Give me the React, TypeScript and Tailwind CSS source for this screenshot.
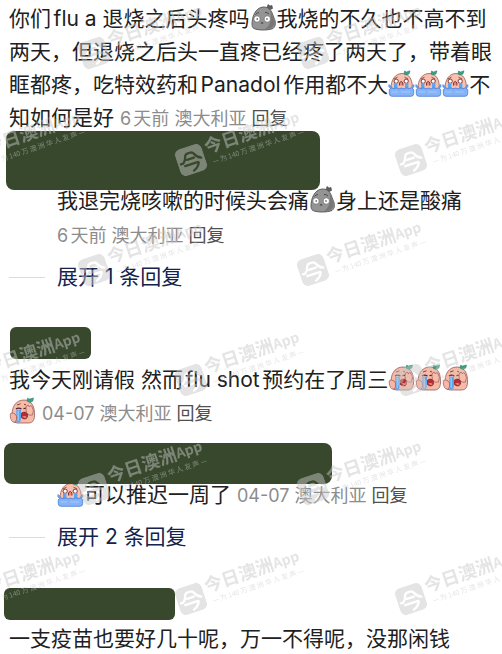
import React from 'react';

interface MetaProps {
  date: string;
  region: string;
}

interface EmojiProps {
  label: string;
}

function Meta({ date, region }: MetaProps) {
  return (
    <span className="text-lg leading-5 text-[#8c8c8c]">
      {date} {region}{' '}
      <button type="button" className="text-[#505050]">回复</button>
    </span>
  );
}

function StoneEmoji({ label }: EmojiProps) {
  return (
    <svg viewBox="0 0 27 28" role="img" aria-label={label} className="-mt-[5px] inline-block h-7 w-[27px] align-[-5px]">
      <path d="M17 5 L18 1.5 L20 3 L22 2.5 L22.5 5.5 L19 7 Z" fill="#5f5f5f" stroke="#404040" strokeWidth=".6" />
      <path
        d="M2 21 C2 14 5 5 13 4 C21 3.6 22 10 24 15 C26 19 26 23 23 25.5 C18 27.5 8 27.5 4 25.5 C2.3 24.5 2 23 2 21 Z"
        fill="#949494"
        stroke="#555"
        strokeWidth=".9"
      />
      <path d="M20 7 C22 12 24 16 24.5 19 C25 23 22 26 15 26.3 C21 22 22 14 20 7 Z" fill="#777" />
      <path d="M5.5 11.5 Q7 9.5 9 9.5 M15 9.5 Q17 9 19 11" fill="none" stroke="#444" strokeWidth=".9" />
      <circle cx="7" cy="16" r="3.2" fill="#fff" stroke="#555" strokeWidth=".6" />
      <circle cx="17.3" cy="16" r="3.2" fill="#fff" stroke="#555" strokeWidth=".6" />
      <circle cx="7.2" cy="16" r=".8" fill="#333" />
      <circle cx="17" cy="16" r=".8" fill="#333" />
      <path d="M10.5 20.5 L12 18.7 L13.7 20.5 Z" fill="#3d3d3d" />
    </svg>
  );
}

function PoolEmoji({ label }: EmojiProps) {
  return (
    <svg viewBox="0 0 27 27" role="img" aria-label={label} className="-mt-[5px] inline-block size-[27px] align-[-5px]">
      <path d="M3.2 19 C2.5 9 8 3.5 14 3.5 C21.5 3.5 25 10 24.3 20 Z" fill="#f8c0ae" stroke="#8a4a45" strokeWidth=".7" />
      <path d="M16 4 L16.5 1 L18.5 2 L22 .8 L21 4 L18 5 Z" fill="#35a486" stroke="#1e7560" strokeWidth=".5" />
      <path d="M5.8 9 L9.5 7.2 M16.5 7.2 L20.2 9" stroke="#7a2f30" strokeWidth=".8" />
      <circle cx="8.2" cy="11.2" r="2.1" fill="#fff" stroke="#71282a" strokeWidth=".9" />
      <circle cx="18.2" cy="11.2" r="2.1" fill="#fff" stroke="#71282a" strokeWidth=".9" />
      <path d="M11.5 15.5 L11.5 12.8 Q13.2 10 14.9 12.8 L14.9 15.5" fill="#e68a80" stroke="#71282a" strokeWidth=".9" />
      <path d="M6 13 H9.4 V20 H6 Z M17 13 H20.4 V20 H17 Z" fill="#5ba6f3" />
      <path d="M.8 14.5 L3 16 L2.5 18 L.8 17 Z M26 14.5 L23.8 16 L24.3 18 L26 17 Z" fill="#69b1f5" stroke="#3f78d8" strokeWidth=".5" />
      <path
        d="M1.3 19.5 Q3.5 16.8 6 18.5 Q9 17.1 11 18.9 Q13.5 17.3 16 18.9 Q18.5 17.1 21 18.5 Q24 16.8 25.7 19.5 V23.5 Q25.7 26.3 23 26.3 H4 Q1.3 26.3 1.3 23.5 Z"
        fill="#85b3f7"
        stroke="#4a7bd6"
        strokeWidth=".8"
      />
      <path d="M3.5 22 H10 M13 22 H22" stroke="#a5c8fd" strokeWidth="1" />
    </svg>
  );
}

function SobEmoji({ label }: EmojiProps) {
  return (
    <svg viewBox="0 0 27 27" role="img" aria-label={label} className="-mt-[5px] inline-block size-[27px] align-[-4px]">
      <path d="M3.5 22 C1.5 10 7 3 15 3 C23 3 26 10 25.5 19 C25 24.5 23 26 19 26 H8 Q4 26 3.5 22 Z" fill="#f5bba9" stroke="#8a4a45" strokeWidth=".7" />
      <path d="M18 4 L18.5 1.2 L20.5 2 L24.5 1 L23.8 4 L21 5.6 Z" fill="#35a486" stroke="#1e7560" strokeWidth=".5" />
      <path d="M8 8 L11.5 6.8 M15 7.2 L17 8" stroke="#7a2f30" strokeWidth=".9" />
      <path d="M7 12 Q9.5 10.2 12.5 12 M14.5 11.7 L18 11" stroke="#5d2024" strokeWidth="1.2" fill="none" />
      <path d="M11.5 17 Q15 13.5 18.5 16.5 Q19.5 22 15 22 Q11.5 21.5 11.5 17 Z" fill="#b52d33" stroke="#71282a" strokeWidth=".7" />
      <path d="M13 19.8 Q15.5 18.3 17.7 20 Q16.5 22 13 19.8" fill="#ef8583" />
      <path d="M7.3 12.8 H12 V21 Q12 25 9.5 25.6 H7.3 Z" fill="#5aa4ee" />
      <path d="M9.2 13.5 V24" stroke="#a9d6ff" strokeWidth="1" />
      <path d="M17.5 15.5 Q16 8.5 19 8.2 Q20 8.2 20.3 10 Q21.5 7.5 23 9.5 Q25.5 13 23.5 18 Q20 19.5 17.5 15.5 Z" fill="#f7bdab" stroke="#9b5550" strokeWidth=".7" />
      <path d="M1.2 18 Q1.2 15.5 3.5 16 Q6.5 16.3 7.5 19 Q8.3 23.5 6 25.3 Q1.5 25.5 1.2 18 Z" fill="#f7b6a5" stroke="#9b5550" strokeWidth=".7" />
    </svg>
  );
}

const marks = [
  [94, 53], [313, 53],
  [-28, 160], [191, 160], [411, 160],
  [94, 270], [313, 270],
  [-28, 380], [191, 380], [411, 380],
  [94, 489], [313, 489],
  [-28, 599], [191, 599], [411, 599],
];

function Watermarks() {
  return (
    <svg aria-hidden="true" className="pointer-events-none absolute inset-0 h-full w-full">
      <defs>
        <mask id="logo-cut" maskUnits="userSpaceOnUse" x="-15" y="-15" width="30" height="30">
          <rect x="-14" y="-14" width="28" height="28" rx="6" fill="#fff" />
          <path
            d="M-11 1 H-8.5 Q-5.5 -1 -4.5 -5 Q-3.8 -7.3 -1 -7.3 H1 Q3.8 -7.3 4.8 -5 Q6 -1 10.5 1 M-3.8 -1.4 H3.5 M-7.5 4 H5.5 Q7 4 6.2 5.6 Q4 9.5 -.5 11"
            fill="none"
            stroke="#000"
            strokeWidth="2.3"
            strokeLinecap="round"
            strokeLinejoin="round"
          />
        </mask>
      </defs>
      {marks.map(([x, y]) => (
        <g
          key={`${x}-${y}`}
          transform={`translate(${x} ${y}) rotate(-18.5)`}
          fill="#c8c8c8"
          opacity=".48"
          className="font-['Noto_Sans_CJK_SC',sans-serif]"
        >
          <rect x="-14" y="-14" width="28" height="28" rx="6" mask="url(#logo-cut)" />
          <text x="17" y="-1" fontSize="18" fontWeight="700">今日澳洲</text>
          <text x="89" y="-2" fontSize="14" fontWeight="700">App</text>
          <text x="20" y="11" fontSize="7">— 为 140 万 澳 洲 华 人 发 声 —</text>
        </g>
      ))}
    </svg>
  );
}

function ExpandButton({ count }: { count: number }) {
  return (
    <button type="button" className="flex items-center gap-3 pl-[9px] leading-6 text-[#13234d]">
      <span className="h-px w-9 bg-[#dcdcdc]" />
      <span>展开 {count} 条回复</span>
    </button>
  );
}

export default function App() {
  return (
    <main className="relative overflow-hidden bg-white font-['Inter','Noto_Sans_CJK_SC',sans-serif] text-[21px] leading-[33px] text-[#202020] [text-autospace:normal]">
      <article>
        <p className="pt-[2px] pr-[6px] pl-[9px]">
          你们flu a 退烧之后头疼吗
          <StoneEmoji label="石化" />
          我烧的不久也不高不到两天，但退烧之后头一直疼已经疼了两天了，带着眼眶都疼，吃特效药和Panadol作用都不大
          <PoolEmoji label="泪池" />
          <PoolEmoji label="泪池" />
          <PoolEmoji label="泪池" />
          不知如何是好 <Meta date="6天前" region="澳大利亚" />
        </p>
        <div className="-mt-[3px] ml-[6px] h-[59px] w-[314px] rounded-lg bg-[#38482d]" />
        <p className="pl-[57px] leading-[22px]">
          我退完烧咳嗽的时候头会痛
          <StoneEmoji label="石化" />
          身上还是酸痛
        </p>
        <p className="mt-[10px] pl-[57px] leading-6">
          <Meta date="6天前" region="澳大利亚" />
        </p>
        <div className="mt-[18px]">
          <ExpandButton count={1} />
        </div>
      </article>

      <article className="mt-[38px]">
        <div className="ml-[10px] h-8 w-[81px] rounded-md bg-[#38482d]" />
        <p className="mt-1 pr-5 pl-[9px]">
          我今天刚请假 然而flu shot预约在了周三
          <SobEmoji label="大哭" />
          <SobEmoji label="大哭" />
          <SobEmoji label="大哭" />
          <SobEmoji label="大哭" /> <Meta date="04-07" region="澳大利亚" />
        </p>
        <div className="relative mt-[14px] ml-1 h-[41px] w-[328px] rounded-lg bg-[#38482d]" />
        <p className="pl-[57px] leading-[22px]">
          <PoolEmoji label="泪池" />
          可以推迟一周了 <Meta date="04-07" region="澳大利亚" />
        </p>
        <div className="mt-[18px]">
          <ExpandButton count={2} />
        </div>
      </article>

      <article className="mt-[39px]">
        <div className="ml-1 h-8 w-[171px] rounded-md bg-[#38482d]" />
        <p className="mt-1 px-[9px] leading-[30px]">一支疫苗也要好几十呢，万一不得呢，没那闲钱</p>
      </article>
      <Watermarks />
    </main>
  );
}
